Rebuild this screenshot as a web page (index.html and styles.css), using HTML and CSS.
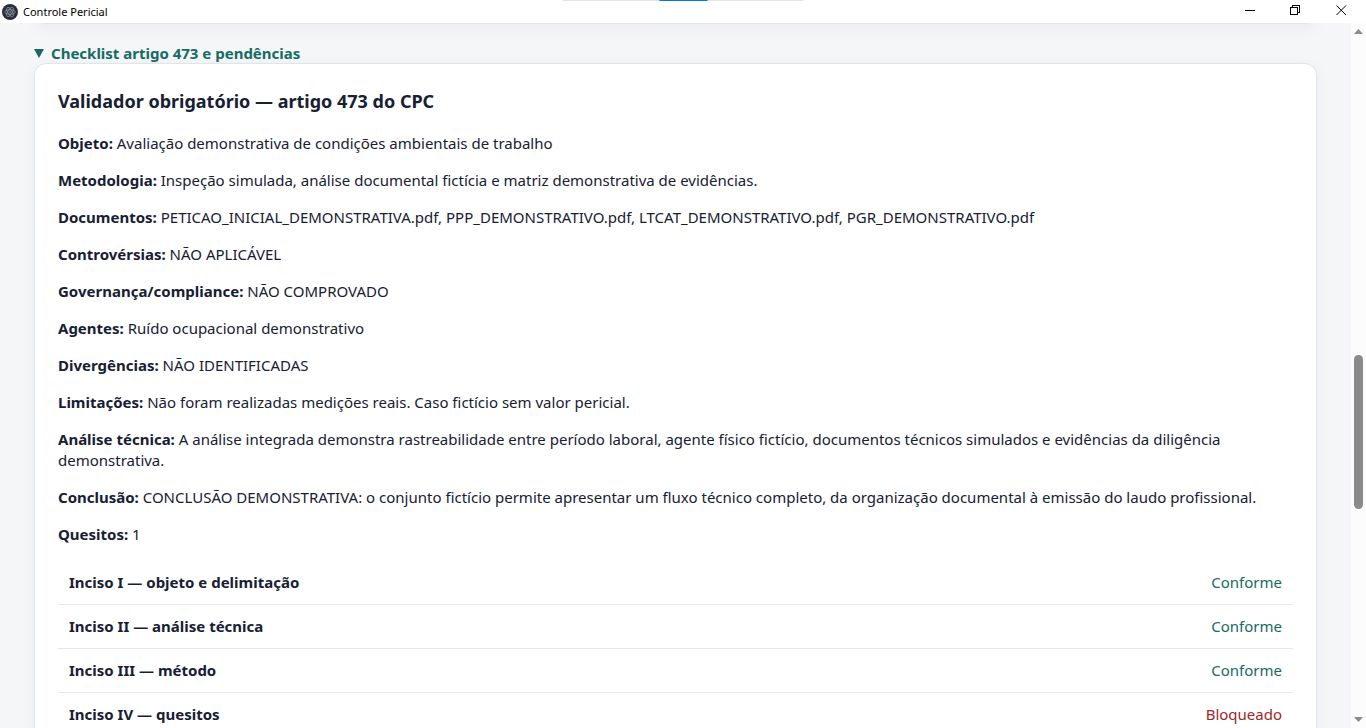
FILE: index.html
```
<!DOCTYPE html>
<html lang="pt-BR">
<head>
  <meta charset="UTF-8">
  <meta name="viewport" content="width=device-width, initial-scale=1.0">
  <title>Controle Pericial</title>
  <link rel="stylesheet" href="styles.css">
</head>
<body>

  <!-- Title bar -->
  <header class="titlebar">
    <svg class="app-icon" viewBox="0 0 16 16" aria-hidden="true">
      <circle cx="8" cy="8" r="8" fill="#2b2e3a"/>
      <g fill="none" stroke="#b4c8d0" stroke-width="0.7" opacity="0.75">
        <ellipse cx="8" cy="8" rx="5.2" ry="2.2"/>
        <ellipse cx="8" cy="8" rx="5.2" ry="2.2" transform="rotate(60 8 8)"/>
        <ellipse cx="8" cy="8" rx="5.2" ry="2.2" transform="rotate(120 8 8)"/>
      </g>
      <circle cx="8" cy="8" r="0.7" fill="#b4c8d0"/>
    </svg>
    <span class="app-name">Controle Pericial</span>
    <div class="snap-hint"><span></span></div>
    <div class="window-buttons">
      <button type="button" aria-label="Minimizar">
        <svg viewBox="0 0 11 11" shape-rendering="crispEdges"><path d="M1 5.500h10"/></svg>
      </button>
      <button type="button" aria-label="Restaurar">
        <svg viewBox="0 0 11 11" shape-rendering="crispEdges"><path d="M.5 2.500h7v7h-7zM2.500 2.500v-2h7v7h-2"/></svg>
      </button>
      <button type="button" aria-label="Fechar">
        <svg viewBox="0 0 11 11"><path d="M.5.5l9.500 9.500M10 .5L.5 10"/></svg>
      </button>
    </div>
  </header>

  <div class="viewport">
    <main class="content">
      <div class="card previous"></div>

      <details open>
        <summary><svg class="marker" viewBox="0 0 10 9" aria-hidden="true"><path d="M0 0h10L5 9z"/></svg>Checklist artigo 473 e pendências</summary>

        <section class="card">
          <h3>Validador obrigatório — artigo 473 do CPC</h3>
          <p><b>Objeto:</b> Avaliação demonstrativa de condições ambientais de trabalho</p>
          <p><b>Metodologia:</b> Inspeção simulada, análise documental fictícia e matriz demonstrativa de evidências.</p>
          <p><b>Documentos:</b> PETICAO_INICIAL_DEMONSTRATIVA.pdf, PPP_DEMONSTRATIVO.pdf, LTCAT_DEMONSTRATIVO.pdf, PGR_DEMONSTRATIVO.pdf</p>
          <p><b>Controvérsias:</b> NÃO APLICÁVEL</p>
          <p><b>Governança/compliance:</b> NÃO COMPROVADO</p>
          <p><b>Agentes:</b> Ruído ocupacional demonstrativo</p>
          <p><b>Divergências:</b> NÃO IDENTIFICADAS</p>
          <p><b>Limitações:</b> Não foram realizadas medições reais. Caso fictício sem valor pericial.</p>
          <p><b>Análise técnica:</b> A análise integrada demonstra rastreabilidade entre período laboral, agente físico fictício, documentos técnicos simulados e evidências da diligência demonstrativa.</p>
          <p><b>Conclusão:</b> CONCLUSÃO DEMONSTRATIVA: o conjunto fictício permite apresentar um fluxo técnico completo, da organização documental à emissão do laudo profissional.</p>
          <p><b>Quesitos:</b> 1</p>

          <ul class="checklist">
            <li><b>Inciso I — objeto e delimitação</b><span class="ok">Conforme</span></li>
            <li><b>Inciso II — análise técnica</b><span class="ok">Conforme</span></li>
            <li><b>Inciso III — método</b><span class="ok">Conforme</span></li>
            <li><b>Inciso IV — quesitos</b><span class="blocked">Bloqueado</span></li>
          </ul>
        </section>
      </details>
    </main>

    <!-- Scrollbar -->
    <div class="scrollbar" aria-hidden="true">
      <svg class="arrow" viewBox="0 0 9 5"><path d="M0 5L4.500 0L9 5z"/></svg>
      <div class="track"><div class="thumb"></div></div>
      <svg class="arrow" viewBox="0 0 9 5"><path d="M0 0h9L4.500 5z"/></svg>
    </div>
  </div>

</body>
</html>
```
FILE: styles.css
```
* {
  box-sizing: border-box;
}

body {
  margin: 0;
  height: 100vh;
  display: flex;
  flex-direction: column;
  overflow: hidden;
  background: #f4f6f8;
  color: #172033;
  font-family: "Segoe UI", "Noto Sans", "Open Sans", sans-serif;
  font-size: 15px;
  line-height: 21px;
}

/* Title bar */
.titlebar {
  position: relative;
  flex: none;
  display: flex;
  align-items: center;
  height: 23px;
  padding-left: 2px;
  background: #fff;
  color: #000;
}

.app-icon {
  width: 16px;
  height: 16px;
}

.app-name {
  margin-left: 5px;
  font-size: 11px;
}

.snap-hint {
  position: absolute;
  top: 0;
  left: 50%;
  width: 241px;
  height: 1px;
  transform: translateX(-50%);
  background: #e5e5e5;
}

.snap-hint span {
  display: block;
  width: 48px;
  height: 1px;
  margin: 0 auto;
  background: #0078d7;
}

.window-buttons {
  display: flex;
  align-self: flex-start;
  margin-left: auto;
  padding-right: 2px;
}

.window-buttons button {
  display: flex;
  align-items: center;
  justify-content: center;
  width: 46px;
  height: 21px;
  padding: 0;
  border: none;
  background: none;
}

.window-buttons svg {
  width: 11px;
  height: 11px;
  fill: none;
  stroke: #000;
}

/* Page */
.viewport {
  flex: 1;
  display: flex;
  min-height: 0;
}

.content {
  flex: 1;
  min-width: 0;
  padding: 0 34px;
  overflow: hidden;
}

.card {
  padding: 22px 23px;
  background: #fff;
  border: 1px solid #dfe5ea;
  border-radius: 12px;
  box-shadow: 0 4px 16px rgba(23, 50, 77, 0.05);
}

.card.previous {
  height: 24px;
  margin-top: -23px;
  margin-bottom: 19px;
  padding: 0;
}

summary {
  display: flex;
  align-items: center;
  gap: 7px;
  color: #176b63;
  font-weight: bold;
  line-height: 20px;
  cursor: pointer;
}

.marker {
  width: 10px;
  height: 9px;
  fill: #176b63;
}

h3 {
  margin: 0 0 16px;
  font-size: 18px;
  line-height: 31px;
}

p {
  margin: 0 0 16px;
}

.checklist {
  margin: 0;
  padding: 0;
  list-style: none;
}

.checklist li {
  display: flex;
  justify-content: space-between;
  padding: 11px;
  border-bottom: 1px solid #e5e7eb;
}

.ok {
  color: #176b63;
}

.blocked {
  color: #a12626;
}

/* Scrollbar */
.scrollbar {
  flex: none;
  display: flex;
  flex-direction: column;
  align-items: center;
  width: 15px;
  padding: 6px 0;
  background: #fcfcfc;
}

.arrow {
  width: 9px;
  height: 5px;
  fill: #8a8a8a;
}

.track {
  flex: 1;
  width: 9px;
  padding: 321px 0 0;
}

.thumb {
  height: 154px;
  border-radius: 5px;
  background: #8a8a8a;
}
```
